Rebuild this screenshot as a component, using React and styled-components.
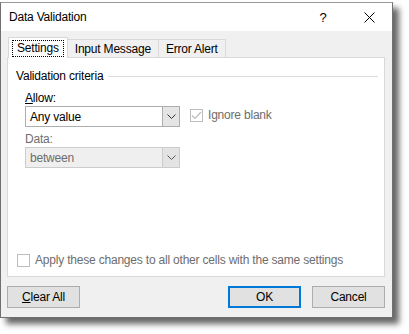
import React from "react";
import styled, { createGlobalStyle } from "styled-components";

const GlobalStyle = createGlobalStyle`
  html, body {
    margin: 0;
    padding: 0;
    background: #ffffff;
  }
  body {
    font-family: "Segoe UI", "Liberation Sans", Arial, sans-serif;
    font-size: 12px;
    letter-spacing: -0.2px;
    color: #000;
  }
`;

const Page = styled.div`
  width: 409px;
  height: 334px;
  padding-top: 2px;
  box-sizing: border-box;
  background: #fff;
`;

const Dialog = styled.div`
  width: 393px;
  height: 316px;
  box-sizing: border-box;
  display: flex;
  flex-direction: column;
  background: #f0f0f0;
  border: 1px solid #707070;
  border-top-color: #9a9a9a;
  box-shadow: 6px 6px 6px rgba(0, 0, 0, 0.6);
`;

const TitleBar = styled.div`
  height: 28px;
  display: flex;
  align-items: center;
  background: #fff;
  padding-left: 8px;
`;

const Title = styled.div`
  flex: 1;
  font-size: 12px;
`;

const TitleButton = styled.div`
  width: ${(p) => p.$w}px;
  display: flex;
  justify-content: center;
  align-items: center;
  font-size: 13px;
  color: #000;
`;

const Body = styled.div`
  flex: 1;
  display: flex;
  flex-direction: column;
  padding: 6px 7px 8px 6px;
`;

const TabRow = styled.div`
  display: flex;
  align-items: flex-end;
  height: 20px;
  padding-left: 1px;
  position: relative;
  z-index: 1;
`;

const Tab = styled.div`
  height: ${(p) => (p.$active ? 21 : 18)}px;
  box-sizing: border-box;
  padding: 0 ${(p) => (p.$active ? 3 : 7)}px;
  display: flex;
  align-items: center;
  border: 1px solid #d9d9d9;
  border-bottom: none;
  margin-left: ${(p) => (p.$first ? 0 : -1)}px;
  background: ${(p) => (p.$active ? "#fff" : "#f0f0f0")};
  margin-bottom: ${(p) => (p.$active ? -1 : 0)}px;
`;

const Focus = styled.span`
  border: 1px dotted #000;
  padding: 0 4px;
  line-height: 15px;
`;

const Panel = styled.div`
  height: 220px;
  box-sizing: border-box;
  background: #fff;
  border: 1px solid #d9d9d9;
  display: flex;
  flex-direction: column;
  padding: 10px 6px 0 8px;
`;

const GroupHead = styled.div`
  display: flex;
  align-items: center;
  gap: 5px;
  height: 16px;
`;

const GroupLine = styled.div`
  flex: 1;
  height: 1px;
  background: #dcdcdc;
`;

const Field = styled.div`
  padding-left: 9px;
  display: flex;
  flex-direction: column;
`;

const Label = styled.div`
  margin-top: ${(p) => p.$mt}px;
  height: 15px;
  line-height: 15px;
  color: ${(p) => (p.$dim ? "#6d6d6d" : "#000")};
`;

const Row = styled.div`
  display: flex;
  align-items: center;
  gap: 10px;
`;

const Combo = styled.div`
  width: 155px;
  height: 21px;
  box-sizing: border-box;
  display: flex;
  border: 1px solid ${(p) => (p.$disabled ? "#cccccc" : "#adadad")};
  background: ${(p) => (p.$disabled ? "#efefef" : "#fff")};
  color: ${(p) => (p.$disabled ? "#6d6d6d" : "#000")};
`;

const ComboText = styled.div`
  flex: 1;
  padding-left: 4px;
  display: flex;
  align-items: center;
`;

const Arrow = styled.div`
  width: 16px;
  display: flex;
  align-items: center;
  justify-content: center;
  background: ${(p) => (p.$disabled ? "#e3e3e3" : "#e5e5e5")};
  border-left: 1px solid ${(p) => (p.$disabled ? "#cccccc" : "#adadad")};
`;

const Check = styled.div`
  width: 13px;
  height: 13px;
  box-sizing: border-box;
  border: 1px solid #bcbcbc;
  background: #fff;
  display: flex;
  align-items: center;
  justify-content: center;
`;

const CheckLabel = styled.label`
  display: flex;
  align-items: center;
  gap: 5px;
  color: #6d6d6d;
  margin-top: -3px;
`;

const Spacer = styled.div`
  flex: 1;
`;

const ApplyRow = styled.div`
  display: flex;
  align-items: center;
  gap: 5px;
  padding-left: 1px;
  margin-bottom: 9px;
  color: #6d6d6d;
`;

const Buttons = styled.div`
  display: flex;
  align-items: center;
  margin-top: 9px;
  gap: 11px;
`;

const Button = styled.div`
  width: 73px;
  height: 22px;
  box-sizing: border-box;
  display: flex;
  align-items: center;
  justify-content: center;
  background: #e1e1e1;
  border: ${(p) => (p.$default ? "2px solid #0078d7" : "1px solid #adadad")};
`;

const U = styled.span`
  text-decoration: underline;
`;

const Chevron = ({ color }) => (
  <svg width="9" height="5" viewBox="0 0 9 5">
    <path d="M0.5 0.5 L4.5 4.5 L8.5 0.5" fill="none" stroke={color} strokeWidth="1" />
  </svg>
);

export default function App() {
  return (
    <Page>
      <GlobalStyle />
      <Dialog>
        <TitleBar>
          <Title>Data Validation</Title>
          <TitleButton $w={46}>?</TitleButton>
          <TitleButton $w={46}>
            <svg width="11" height="11" viewBox="0 0 11 11">
              <path d="M0.5 0.5 L10.5 10.5 M10.5 0.5 L0.5 10.5" stroke="#000" strokeWidth="1" />
            </svg>
          </TitleButton>
        </TitleBar>
        <Body>
          <TabRow>
            <Tab $active $first>
              <Focus>Settings</Focus>
            </Tab>
            <Tab>Input Message</Tab>
            <Tab>Error Alert</Tab>
          </TabRow>
          <Panel>
            <GroupHead>
              <span>Validation criteria</span>
              <GroupLine />
            </GroupHead>
            <Field>
              <Label $mt={7}>
                <U>A</U>llow:
              </Label>
              <Row>
                <Combo>
                  <ComboText>Any value</ComboText>
                  <Arrow>
                    <Chevron color="#333" />
                  </Arrow>
                </Combo>
                <CheckLabel>
                  <Check>
                    <svg width="11" height="9" viewBox="0 0 11 9">
                      <path d="M1 4.5 L4 7.5 L10 1" fill="none" stroke="#bcbcbc" strokeWidth="1.2" />
                    </svg>
                  </Check>
                  Ignore blank
                </CheckLabel>
              </Row>
              <Label $mt={5} $dim>
                Data:
              </Label>
              <Row>
                <Combo $disabled>
                  <ComboText>between</ComboText>
                  <Arrow $disabled>
                    <Chevron color="#555" />
                  </Arrow>
                </Combo>
              </Row>
            </Field>
            <Spacer />
            <ApplyRow>
              <Check />
              Apply these changes to all other cells with the same settings
            </ApplyRow>
          </Panel>
          <Buttons>
            <Button>
              <span>
                <U>C</U>lear All
              </span>
            </Button>
            <Spacer />
            <Button $default>OK</Button>
            <Button>Cancel</Button>
          </Buttons>
        </Body>
      </Dialog>
    </Page>
  );
}
